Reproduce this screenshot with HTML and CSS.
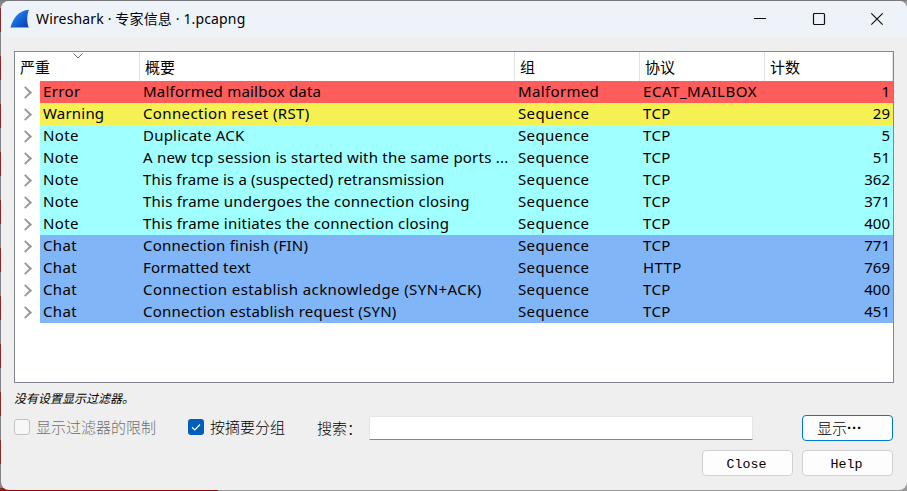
FILE: index.html
```html
<!DOCTYPE html>
<html lang="zh-CN">
<head>
<meta charset="utf-8">
<title>Wireshark · 专家信息 · 1.pcapng</title>
<link rel="stylesheet" href="styles.css">
</head>
<body>
<div class="window">
  <header class="titlebar">
    <svg class="logo" width="20" height="20" viewBox="0 0 20 20"><defs><linearGradient id="fin" x1="0" y1="0" x2="1" y2="1"><stop offset="0" stop-color="#4aa0f5"/><stop offset=".5" stop-color="#1667d9"/><stop offset="1" stop-color="#0a3fae"/></linearGradient></defs><path d="M.5 18.500C3.500 8 9 1.500 19 .7C16.700 6 16.800 13 18.700 18.500Z" fill="url(#fin)"/><path d="M.5 18.500H18.700" stroke="#8fa6c6"/></svg>
    <span class="title">Wireshark · 专家信息 · 1.pcapng</span>
    <div class="controls">
      <svg width="14" height="14" viewBox="0 0 14 14"><path d="M1 6.500H13"/></svg>
      <svg width="14" height="14" viewBox="0 0 14 14"><rect x="1.500" y="1.500" width="11" height="11" rx="1"/></svg>
      <svg width="14" height="14" viewBox="0 0 14 14"><path d="M1.300 1.300L12.700 12.700M12.700 1.300L1.300 12.700"/></svg>
    </div>
  </header>
  <main class="content">
    <div class="tree">
      <div class="row head"><span>严重<svg class="sort" width="10" height="6" viewBox="0 0 10 6"><path d="M.5 .5L5 5L9.500 .5"/></svg></span><span>概要</span><span>组</span><span>协议</span><span>计数</span></div>
      <div class="row error"><span><i></i><b>Error</b></span><span>Malformed mailbox data</span><span>Malformed</span><span>ECAT_MAILBOX</span><span>1</span></div>
      <div class="row warning"><span><i></i><b>Warning</b></span><span>Connection reset (RST)</span><span>Sequence</span><span>TCP</span><span>29</span></div>
      <div class="row note"><span><i></i><b>Note</b></span><span>Duplicate ACK</span><span>Sequence</span><span>TCP</span><span>5</span></div>
      <div class="row note"><span><i></i><b>Note</b></span><span>A new tcp session is started with the same ports ...</span><span>Sequence</span><span>TCP</span><span>51</span></div>
      <div class="row note tight"><span><i></i><b>Note</b></span><span>This frame is a (suspected) retransmission</span><span>Sequence</span><span>TCP</span><span>362</span></div>
      <div class="row note"><span><i></i><b>Note</b></span><span>This frame undergoes the connection closing</span><span>Sequence</span><span>TCP</span><span>371</span></div>
      <div class="row note"><span><i></i><b>Note</b></span><span>This frame initiates the connection closing</span><span>Sequence</span><span>TCP</span><span>400</span></div>
      <div class="row chat"><span><i></i><b>Chat</b></span><span>Connection finish (FIN)</span><span>Sequence</span><span>TCP</span><span>771</span></div>
      <div class="row chat"><span><i></i><b>Chat</b></span><span>Formatted text</span><span>Sequence</span><span>HTTP</span><span>769</span></div>
      <div class="row chat wide"><span><i></i><b>Chat</b></span><span>Connection establish acknowledge (SYN+ACK)</span><span>Sequence</span><span>TCP</span><span>400</span></div>
      <div class="row chat"><span><i></i><b>Chat</b></span><span>Connection establish request (SYN)</span><span>Sequence</span><span>TCP</span><span>451</span></div>
    </div>
    <p class="hint">没有设置显示过滤器。</p>
    <div class="options">
      <label class="check disabled"><span class="box"></span>显示过滤器的限制</label>
      <label class="check checked"><span class="box"><svg width="16" height="16" viewBox="0 0 16 16"><path d="M4 8.300L6.800 11L12 5.500"/></svg></span>按摘要分组</label>
      <span class="search-label">搜索：</span>
      <input class="search" type="text">
      <button class="btn primary">显示<span class="dots">···</span></button>
    </div>
    <div class="actions"><button class="btn">Close</button><button class="btn">Help</button></div>
  </main>
</div>
</body>
</html>
```
FILE: styles.css
```css
* { box-sizing: border-box; }
body {
  margin: 0;
  width: 907px;
  height: 491px;
  padding: 1px 0 1px 1px;
  overflow: hidden;
  font: 15px/22px "Noto Sans", "Noto Sans CJK SC", sans-serif;
  color: #000;
  background:
    linear-gradient(90deg, #920606 218px, #999 218px) 0 100% / 100% 1px no-repeat,
    linear-gradient(#77797c, #77797c) 0 0 / 100% 1px no-repeat,
    linear-gradient(#999, #999) 100% 0 / 20px 100% no-repeat,
    repeating-linear-gradient(#8b2b30 0 24px, #858585 24px 48px) 0 8px / 100% 480px;
}
.window { height: 489px; width: 906px; background: #efefef; border-radius: 8px; overflow: hidden; }
.titlebar { height: 36px; background: #eef3f9; display: flex; align-items: center; padding: 0 23px 0 9px; }
.logo { margin-top: -1px; }
.title { margin-left: 6px; font-size: 14px; letter-spacing: .15px; white-space: nowrap; }
.controls { margin-left: auto; display: flex; gap: 44.5px; }
.controls svg { fill: none; stroke: #111; stroke-width: 1.2; }
.content { padding: 14px 13px 0; }
.tree { width: 880px; height: 332px; border: 1px solid #828790; background: #fff; }
.row { display: grid; grid-template-columns: 125px 375px 125px 125px 128px; height: 22px; white-space: nowrap; }
.row > span { padding-left: 3px; background: var(--c); line-height: 21px; letter-spacing: .35px; }
.row > span:nth-child(2) { letter-spacing: .22px; }
.row.tight > span:nth-child(2) { letter-spacing: .15px; }
.row.wide > span:nth-child(2) { letter-spacing: .41px; }
.warning > span:nth-child(2) { letter-spacing: .37px; }
.warning b { letter-spacing: .2px; }
.error > span:nth-child(4) { letter-spacing: .55px; }
.row:not(.head) > span:nth-child(5) { text-align: right; padding-right: 3px; letter-spacing: 0; }
.row:not(.head) > span:first-child { display: flex; padding: 0; background: none; }
.row b { flex: 1; padding-left: 3px; font-weight: normal; background: var(--c); }
.row i { width: 25px; display: flex; align-items: center; padding-left: 6px; }
.row i::before { content: ""; width: 7px; height: 7px; border: solid #999; border-width: 2px 2px 0 0; transform: rotate(45deg); margin-top: 1px; }
.error { --c: #ff5c5c; }
.warning { --c: #f6f152; }
.note { --c: #a0ffff; }
.chat { --c: #80b5f7; }
.row.head { height: 29px; font-family: "Noto Sans CJK SC", sans-serif; }
.row.head > span { position: relative; line-height: 29px; padding-left: 5px; border-right: 1px solid #e2e2e2; letter-spacing: 0; }
.sort { position: absolute; left: 58px; top: 1px; fill: none; stroke: #666; }
.hint { margin: 6px 0 0; height: 18px; font: italic 12px/18px "Noto Sans CJK SC", sans-serif; }
.options { display: flex; align-items: center; height: 26px; margin-top: 8px; font-family: "Noto Sans CJK SC", sans-serif; font-weight: 300; line-height: 20px; white-space: nowrap; }
.check { display: flex; align-items: center; gap: 6px; margin-top: -2px; }
.box { width: 16px; height: 16px; border: 1px solid #c3c3c3; border-radius: 3px; background: #f7f7f7; }
.disabled { color: #707070; width: 174px; }
.checked { width: 129px; }
.checked .box { border: 0; background: #005fb8; display: flex; }
.box path { fill: none; stroke: #fff; stroke-width: 1.2; }
.search-label { width: 52px; }
.search { width: 384px; height: 24px; border: 1px solid #e5e5e5; border-bottom-color: #868686; background: #fff; padding: 0 4px; border-radius: 2px 2px 0 0; margin-top: 0; }
.btn { width: 91px; height: 26px; padding: 3px 2px 0 0; border: 1px solid #d0d0d0; border-radius: 4px; background: #fdfdfd; font: 13.33px/22px "Liberation Mono", monospace; color: #000; }
.primary { display: flex; align-items: center; margin-left: 49px; border-color: #0078d4; font: 300 15px/22px "Noto Sans CJK SC", sans-serif; padding: 0 0 0 14px; }
.dots { font: 700 15px/22px "Liberation Sans", sans-serif; }
.actions { display: flex; justify-content: flex-end; gap: 9px; padding-right: 1px; margin-top: 9px; }
```
